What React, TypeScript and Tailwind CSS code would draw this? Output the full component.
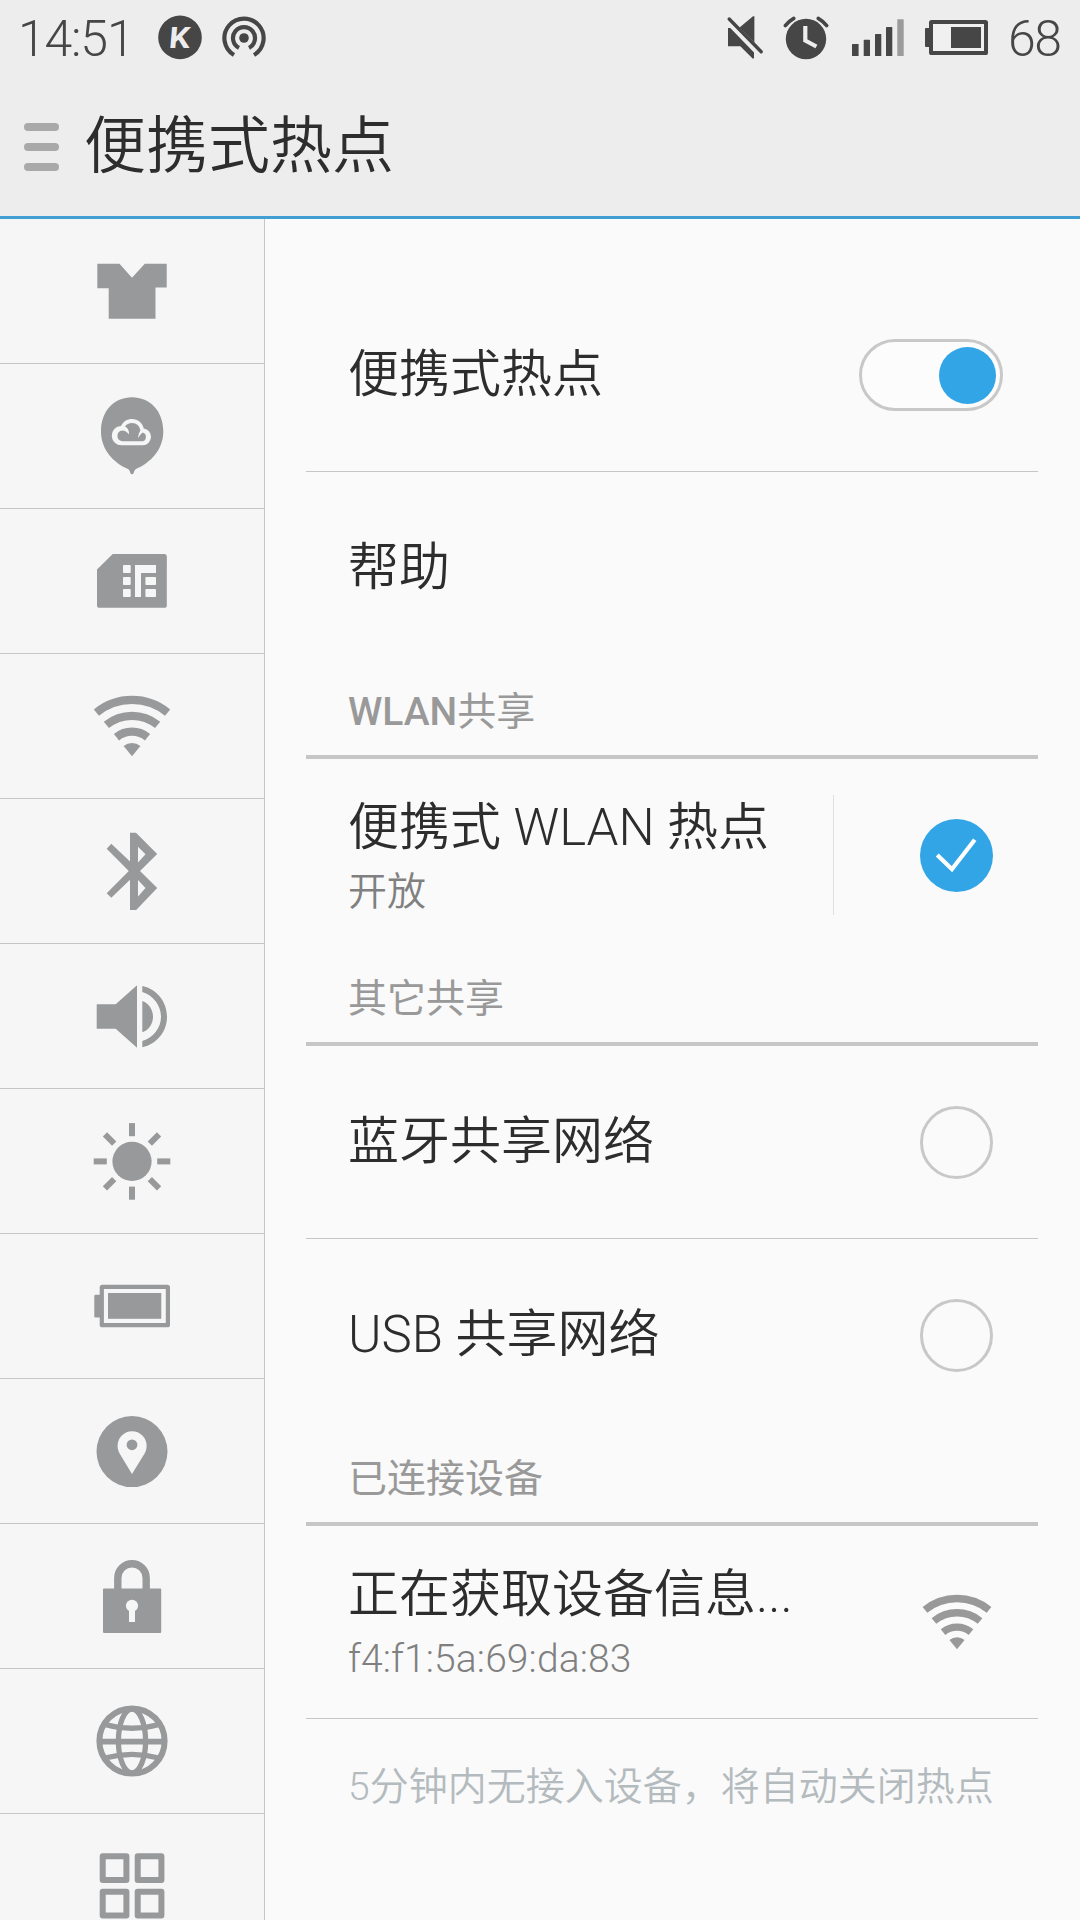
import React from "react";

function SideIcon({ children }: { children: React.ReactNode }) {
  return (
    <svg width="80" height="80" viewBox="0 0 80 80" fill="#98999a">
      {children}
    </svg>
  );
}

function WifiShape() {
  return (
    <>
      <g fill="none" stroke="currentColor" strokeWidth="8.2">
        <path d="M4.4 26.6A56.4 56.4 0 0 1 75.6 26.6" />
        <path d="M14.4 38.9A40.5 40.5 0 0 1 65.6 38.9" />
        <path d="M24.5 51.2A24.6 24.6 0 0 1 55.5 51.2" />
      </g>
      <path d="M40 70.3L31.6 60A13.3 13.3 0 0 1 48.4 60Z" fill="currentColor" />
    </>
  );
}

const sideIcons: { name: string; icon: React.ReactNode }[] = [
  {
    name: "theme",
    icon: <path d="M5.3 12.7H27.5L40 26.7L52.8 12.7H74.7V36.5H63.5V67.7H16.7V37.3H5.3Z" />,
  },
  {
    name: "cloud",
    icon: (
      <>
        <path d="M40 1.3C58 1.3 71.3 15 71.3 35.5C71.3 54 58 67 44 73C42.5 74 42 75.5 41.5 77.5Q40 79 38.5 77.5C38 75.5 37.5 74 36 73C22 67 9 54 9 35.5C9 15 22 1.3 40 1.3Z" />
        <path
          fill="#f6f6f6"
          fillRule="evenodd"
          d="M29.8 49.3A9.3 9.3 0 0 1 29 30C31.2 25.5 35.2 23 40 23C45.8 23 50.4 26.8 51.8 32.4A8.5 8.5 0 0 1 50.8 49.3ZM30.2 45.3H50.8A4.6 4.6 0 0 0 50.8 36.6C48.8 37.6 47.8 39.6 46.2 42.2C46.2 38.6 47.2 36.4 48.4 34.8C47.8 30 44.6 27 40 27C37 27 34.4 28.4 33 30.6C35.8 32 37.2 34.6 37.1 38.6C35.2 36.2 33.4 34.4 30.2 34.4A5.5 5.5 0 0 0 30.2 45.3Z"
        />
      </>
    ),
  },
  {
    name: "sim",
    icon: (
      <>
        <path d="M20.7 13H72.2Q74.8 13 74.8 15.6V64.2Q74.8 66.8 72.2 66.8H7.6Q5 66.8 5 64.2V28.5Z" />
        <g fill="#f6f6f6">
          <rect x="31" y="24" width="7.7" height="8" rx="0.8" />
          <rect x="31" y="36" width="7.7" height="8" rx="0.8" />
          <rect x="31" y="48" width="7.7" height="8" rx="0.8" />
          <path d="M43 24H64V32H49V56H43Z" />
          <rect x="53.4" y="36" width="10.6" height="8" rx="0.8" />
          <rect x="53.4" y="48" width="10.6" height="8" rx="0.8" />
        </g>
      </>
    ),
  },
  {
    name: "wifi",
    icon: (
      <g className="text-[#98999a]">
        <WifiShape />
      </g>
    ),
  },
  {
    name: "bluetooth",
    icon: (
      <path
        fillRule="evenodd"
        d="M38 1.7H44L65.2 23L48 40L65.2 57L44.2 79H38V48.8L19.3 66.7L14.7 62.2L36.8 40L14.7 17.7L19.3 12.7L38 30.6ZM46 15.7V31.5L53.5 23.3ZM46 49V65.5L53.5 57Z"
      />
    ),
  },
  {
    name: "sound",
    icon: (
      <>
        <path d="M4.7 28.3H23.7L45 9.3V71.7L23.7 52.7H4.7Z" />
        <path d="M50.3 25C57 27.5 61 34 61 40.7S57 54 50.3 56.3Z" />
        <path d="M50.3 10C65 13 75 26 75 40.7S65 68 50.3 71.3V65C61 62 69 52 69 40.7S61 19 50.3 16Z" />
      </>
    ),
  },
  {
    name: "brightness",
    icon: (
      <>
        <circle cx="40" cy="40.4" r="19.6" />
        {[0, 45, 90, 135, 180, 225, 270, 315].map((deg) => (
          <rect key={deg} x="37" y="2.1" width="6" height="13.1" transform={`rotate(${deg} 40 40.4)`} />
        ))}
      </>
    ),
  },
  {
    name: "battery",
    icon: (
      <>
        <rect x="9.8" y="20.8" width="66.1" height="38.4" rx="0.5" fill="none" stroke="#98999a" strokeWidth="4.2" />
        <rect x="2.3" y="28.7" width="6.5" height="22.7" rx="1.2" />
        <rect x="16" y="27" width="53.3" height="25.8" />
      </>
    ),
  },
  {
    name: "location",
    icon: (
      <>
        <circle cx="40" cy="40.6" r="35.5" />
        <path d="M40 63L27.6 42.5C26.2 40 25.6 37.5 25.6 34.8A14.5 14.5 0 0 1 54.6 34.8C54.6 37.5 54 40 52.6 42.5Z" fill="#f6f6f6" />
        <circle cx="40" cy="33.8" r="5.4" />
      </>
    ),
  },
  {
    name: "security",
    icon: (
      <>
        <path d="M25.8 34V22A14.2 14.2 0 0 1 54.2 22V34" fill="none" stroke="#98999a" strokeWidth="7.4" />
        <rect x="11" y="32.4" width="58.2" height="44.6" rx="1" />
        <circle cx="40" cy="49.8" r="6.1" fill="#f6f6f6" />
        <rect x="37" y="52" width="6" height="14" fill="#f6f6f6" />
      </>
    ),
  },
  {
    name: "language",
    icon: (
      <g fill="none" stroke="#98999a" strokeWidth="5.3">
        <circle cx="40" cy="40" r="32.6" strokeWidth="6" />
        <ellipse cx="40" cy="40" rx="13.6" ry="32" />
        <path d="M6 40.7H74" strokeWidth="5.8" />
        <path d="M13 23.5Q40 31 67 23.5" />
        <path d="M13 57Q40 49.8 67 57" />
      </g>
    ),
  },
  {
    name: "apps",
    icon: (
      <g fill="none" stroke="#98999a" strokeWidth="6" strokeLinejoin="round">
        <rect x="10.7" y="10.3" width="23.7" height="23.7" />
        <rect x="45.7" y="10.3" width="23.7" height="23.7" />
        <rect x="10.7" y="45.7" width="23.7" height="23.7" />
        <rect x="45.7" y="45.7" width="23.7" height="23.7" />
      </g>
    ),
  },
];

function StatusBar() {
  return (
    <div className="flex h-[76px] justify-between text-[50px] leading-[78px] font-light text-[#464646]">
      <div className="flex pl-[18px]">
        <span className="w-[135px] tracking-[-1.2px]">14:51</span>
        <svg width="124" height="76" viewBox="153 0 124 76" fill="#464646">
          <circle cx="180" cy="37.4" r="21.8" />
          <text transform="translate(168.2 48) skewX(-5) scale(1.12 1)" fontSize="29.5" fontWeight="700" fill="#ededed">
            K
          </text>
          <circle cx="244" cy="38" r="4.8" />
          <g fill="none" stroke="#464646" strokeWidth="4.2">
            <path d="M239 47.9A11 11 0 1 1 249 47.9" />
            <path d="M234 55A19.6 19.6 0 1 1 254 55" />
          </g>
        </svg>
      </div>
      <div className="flex">
        <svg width="282" height="76" viewBox="726 0 282 76" fill="#464646">
          <path d="M729.2 19L761.2 51.8" stroke="#464646" strokeWidth="3.4" strokeLinecap="round" />
          <path d="M739.6 27.4L753 16.2H754.4V42.4Z" />
          <path d="M728 28H730.3L754 52.6V58.6H752.6L740.3 46.3H728Z" />
          <circle cx="806" cy="39" r="20.2" />
          <path d="M805.3 26V40.6L816.4 46.5" fill="none" stroke="#ededed" strokeWidth="4.2" />
          <path d="M785.3 25.6Q788.5 21.5 793.8 18.4M818.2 18.4Q823.5 21.5 826.7 25.6" fill="none" stroke="#464646" strokeWidth="3.6" strokeLinecap="round" />
          <rect x="852" y="44" width="6.6" height="12" rx="0.6" />
          <rect x="863.7" y="39.8" width="6.3" height="16.2" rx="0.6" />
          <rect x="875" y="34" width="6.3" height="22" rx="0.6" />
          <rect x="886" y="27" width="6.3" height="29" rx="0.6" />
          <rect x="897.3" y="19.2" width="6.4" height="36.8" rx="0.6" fill="#9b9b9b" />
          <rect x="931" y="22" width="55" height="31" rx="0.6" fill="#f0f0f0" stroke="#464646" strokeWidth="4" />
          <rect x="925" y="28" width="5" height="19" rx="1" />
          <rect x="951" y="27" width="30" height="21" />
        </svg>
        <span className="w-[72px] tracking-[-1.5px]">68</span>
      </div>
    </div>
  );
}

function SectionHeader({ children }: { children: React.ReactNode }) {
  return (
    <div className="h-[95px] border-b-4 border-[#c6c6c6] pl-[42px] pt-5 text-[39px] leading-[56px] font-normal text-[#999999]">
      {children}
    </div>
  );
}

function Row({
  title,
  subtitle,
  divider,
  children,
}: {
  title: string;
  subtitle?: string;
  divider?: boolean;
  children?: React.ReactNode;
}) {
  return (
    <div className={divider ? "border-b border-[#c6c6c6]" : ""}>
      <div className="flex h-[192px] items-center justify-between pl-[42px] pr-[45px]">
        <div className={subtitle ? "flex flex-col pt-0.5 font-[350]" : "flex flex-col font-[350]"}>
          <span className="text-[51px] leading-[72px] text-[#2d2d2d]">{title}</span>
          {subtitle && (
            <span className="text-[39px] leading-[56px] tracking-[0.1px] text-[#808080]">{subtitle}</span>
          )}
        </div>
        {children}
      </div>
    </div>
  );
}

function Radio() {
  return <div className="size-[73px] rounded-full border-3 border-[#c8c8c8]" />;
}

export default function App() {
  return (
    <div className="flex h-[1920px] w-[1080px] flex-col overflow-hidden bg-[#fafafa] font-['Roboto','Noto_Sans_CJK_SC',sans-serif]">
      <header className="h-[219px] shrink-0 border-b-3 border-[#419fd3] bg-[#ededed]">
        <StatusBar />
        <div className="flex items-start pl-6">
          <div className="flex flex-col gap-3 pt-[47px]">
            <div className="h-2 w-[35px] rounded-full bg-[#a9a9a9]" />
            <div className="h-2 w-[35px] rounded-full bg-[#a9a9a9]" />
            <div className="h-2 w-[35px] rounded-full bg-[#a9a9a9]" />
          </div>
          <h1 className="pl-[25px] pt-[26px] text-[62px] leading-[90px] font-[350] text-[#2d2d2d]">便携式热点</h1>
        </div>
      </header>

      <div className="flex min-h-0 flex-1">
        <nav className="w-[265px] shrink-0 overflow-hidden border-r border-[#c6c6c6] bg-[#f6f6f6]">
          {sideIcons.map((item) => (
            <div key={item.name} className="flex h-[145px] items-center justify-center border-b border-[#c6c6c6]">
              <SideIcon>{item.icon}</SideIcon>
            </div>
          ))}
        </nav>

        <main className="flex-1 pl-[41px] pr-[42px] pt-[60px]">
          <Row title="便携式热点" divider>
            <div className="-mr-2.5 flex h-[72px] w-[144px] items-center justify-end rounded-full border-3 border-[#c8c8c8] bg-[#fcfcfc] pr-1">
              <div className="size-[57px] rounded-full bg-[#32a5e7]" />
            </div>
          </Row>
          <Row title="帮助" />

          <SectionHeader>
            <span className="font-medium">WLAN</span>共享
          </SectionHeader>
          <Row title="便携式 WLAN 热点" subtitle="开放">
            <div className="flex items-center gap-[86px]">
              <div className="h-[120px] w-px bg-[#e0e0e0]" />
              <svg width="73" height="73" viewBox="0 0 72 72" fill="none">
                <circle cx="36" cy="36" r="36" fill="#32a5e7" />
                <path d="M17 35.5L31.5 49.5L54 20.5" stroke="#ffffff" strokeWidth="4.2" />
              </svg>
            </div>
          </Row>

          <SectionHeader>其它共享</SectionHeader>
          <Row title="蓝牙共享网络" divider>
            <Radio />
          </Row>
          <Row title="USB 共享网络">
            <Radio />
          </Row>

          <SectionHeader>已连接设备</SectionHeader>
          <Row title="正在获取设备信息..." subtitle="f4:f1:5a:69:da:83" divider>
            <svg width="72" height="72" viewBox="0 0 80 80" className="text-[#999999]">
              <WifiShape />
            </svg>
          </Row>
          <p className="pl-[42px] pt-10 text-[39px] leading-[56px] font-[350] whitespace-nowrap text-[#b4bbbe]">
            5分钟内无接入设备，将自动关闭热点
          </p>
        </main>
      </div>
    </div>
  );
}
